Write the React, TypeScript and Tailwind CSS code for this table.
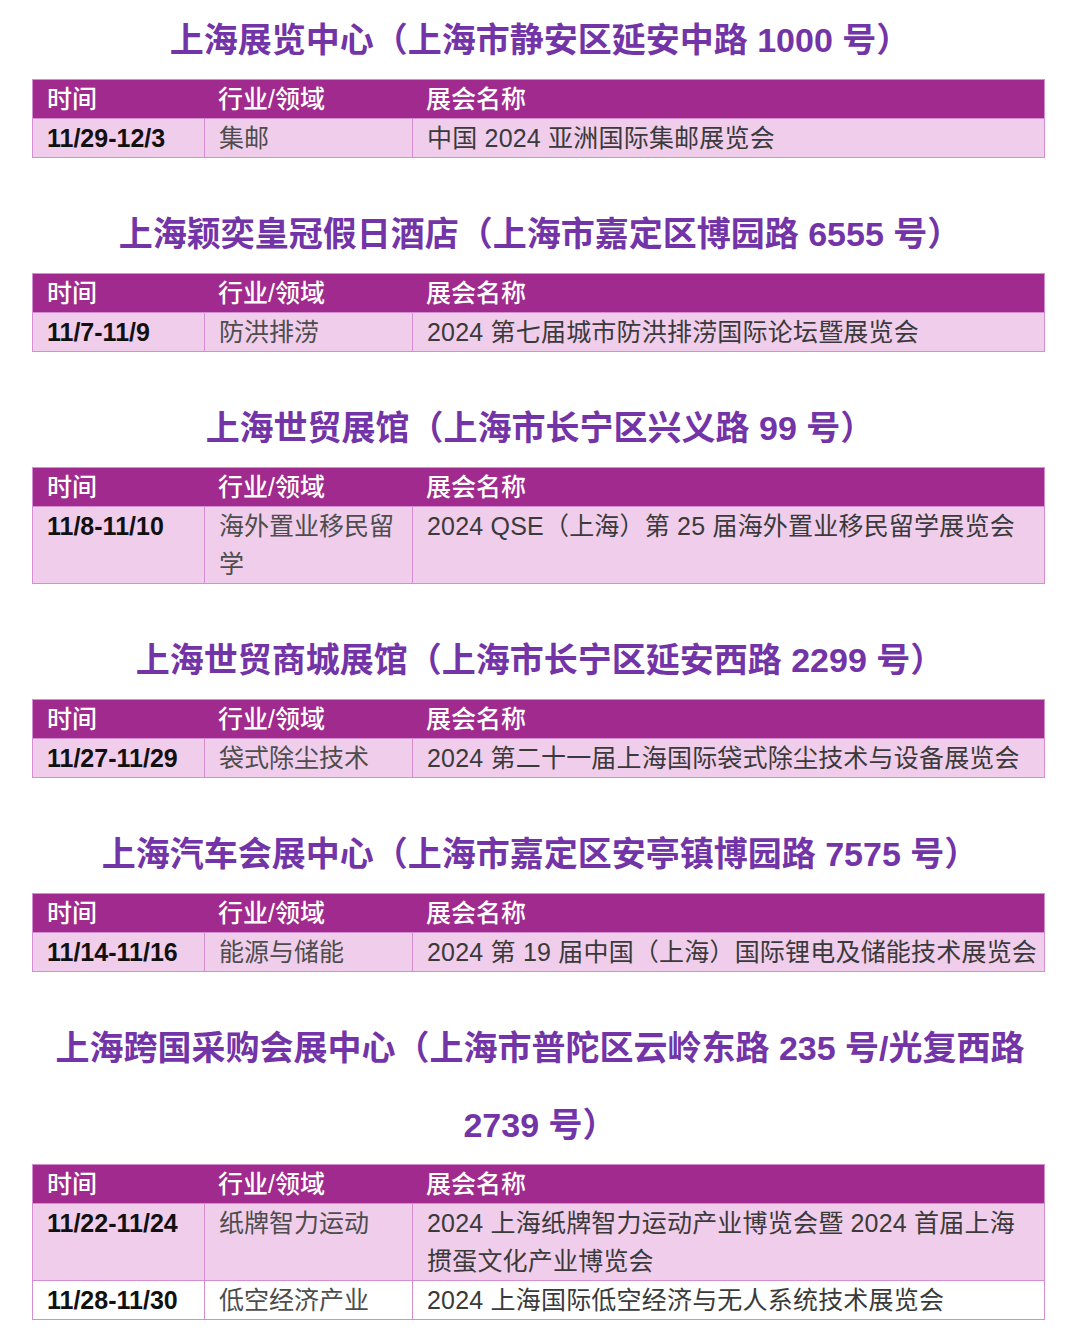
import React from "react";

type Row = {
  date: string;
  field: React.ReactNode;
  name: React.ReactNode;
  white?: boolean;
  nowrap?: boolean;
};

type Section = {
  title: React.ReactNode;
  rows: Row[];
};

const N = ({ children }: { children: React.ReactNode }) => (
  <span className="font-bold">{children}</span>
);

const sections: Section[] = [
  {
    title: (
      <>
        上海展览中心（上海市静安区延安中路 <N>1000</N> 号）
      </>
    ),
    rows: [{ date: "11/29-12/3", field: "集邮", name: "中国 2024 亚洲国际集邮展览会" }],
  },
  {
    title: (
      <>
        上海颖奕皇冠假日酒店（上海市嘉定区博园路 <N>6555</N> 号）
      </>
    ),
    rows: [{ date: "11/7-11/9", field: "防洪排涝", name: "2024 第七届城市防洪排涝国际论坛暨展览会" }],
  },
  {
    title: (
      <>
        上海世贸展馆（上海市长宁区兴义路 <N>99</N> 号）
      </>
    ),
    rows: [
      {
        date: "11/8-11/10",
        field: "海外置业移民留学",
        name: "2024 QSE（上海）第 25 届海外置业移民留学展览会",
        nowrap: true,
      },
    ],
  },
  {
    title: (
      <>
        上海世贸商城展馆（上海市长宁区延安西路 <N>2299</N> 号）
      </>
    ),
    rows: [
      {
        date: "11/27-11/29",
        field: "袋式除尘技术",
        name: "2024 第二十一届上海国际袋式除尘技术与设备展览会",
        nowrap: true,
      },
    ],
  },
  {
    title: (
      <>
        上海汽车会展中心（上海市嘉定区安亭镇博园路 <N>7575</N> 号）
      </>
    ),
    rows: [
      {
        date: "11/14-11/16",
        field: "能源与储能",
        name: "2024 第 19 届中国（上海）国际锂电及储能技术展览会",
        nowrap: true,
      },
    ],
  },
  {
    title: (
      <>
        上海跨国采购会展中心（上海市普陀区云岭东路 <N>235</N> 号/光复西路 <N>2739</N> 号）
      </>
    ),
    rows: [
      {
        date: "11/22-11/24",
        field: "纸牌智力运动",
        name: (
          <>
            2024 上海纸牌智力运动产业博览会暨 2024 首届上海
            <br />
            掼蛋文化产业博览会
          </>
        ),
        nowrap: true,
      },
      {
        date: "11/28-11/30",
        field: "低空经济产业",
        name: "2024 上海国际低空经济与无人系统技术展览会",
        white: true,
        nowrap: true,
      },
    ],
  },
];

function ExpoTable({ rows }: { rows: Row[] }) {
  return (
    <div className="w-[1013px] border border-[#D68ED2] text-[25px]">
      <div className="grid grid-cols-[171px_208px_632px] bg-[#A02A8E] text-white font-medium leading-[38px]">
        <div className="pl-[14px]">时间</div>
        <div className="pl-[14px]">行业/领域</div>
        <div className="pl-[14px]">展会名称</div>
      </div>
      {rows.map((r, i) => (
        <div
          key={i}
          className={`grid grid-cols-[171px_208px_632px] leading-[38px] border-t border-[#D68ED2] ${
            r.white ? "bg-white" : "bg-[#F0CDEB]"
          }`}
        >
          <div className="pl-[14px] font-bold text-[#111]">{r.date}</div>
          <div className="pl-[14px] pr-[10px] border-l border-[#D68ED2] text-[#4d4d4d]">{r.field}</div>
          <div
            className={`pl-[14px] border-l border-[#D68ED2] text-[#3a3a3a] tracking-[0.2px] ${
              r.nowrap ? "whitespace-nowrap" : ""
            }`}
          >
            {r.name}
          </div>
        </div>
      ))}
    </div>
  );
}

export default function App() {
  return (
    <div className="w-[1080px] min-h-[1338px] bg-white pt-[2px] font-['Liberation_Sans','Noto_Sans_CJK_SC',sans-serif]">
      {sections.map((s, i) => (
        <div key={i} className="px-[32px] mb-[38px]">
          <div className="text-center text-[34px] leading-[77px] text-[#7234A6] font-semibold">
            {s.title}
          </div>
          <ExpoTable rows={s.rows} />
        </div>
      ))}
    </div>
  );
}
